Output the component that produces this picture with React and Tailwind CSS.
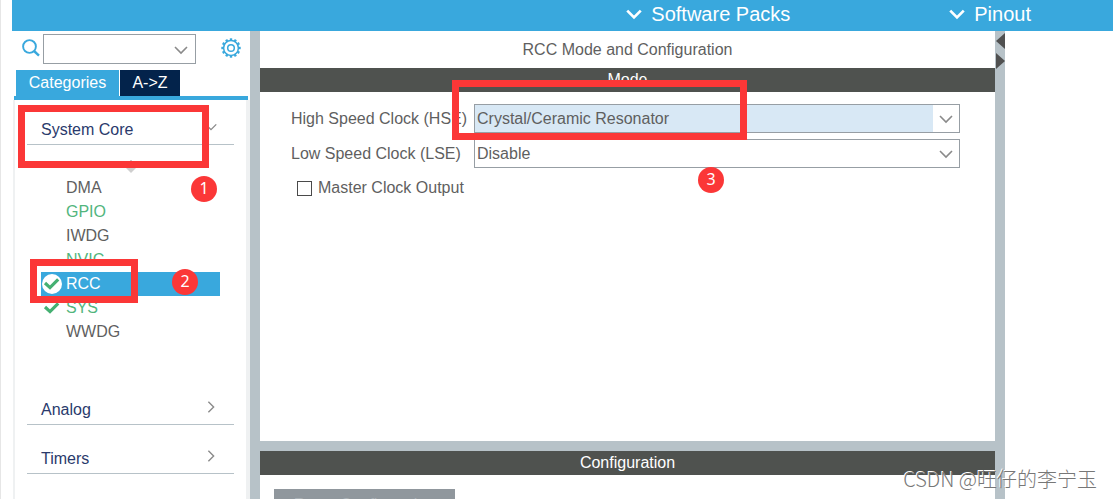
import { useState } from 'react'

const peripherals = [
  { name: 'DMA' },
  { name: 'GPIO', configured: true },
  { name: 'IWDG' },
  { name: 'NVIC', configured: true },
  { name: 'RCC', configured: true, check: true },
  { name: 'SYS', configured: true, check: true },
  { name: 'WWDG' },
]

const moreSections = ['Analog', 'Timers', 'Connectivity']

function Chevron({ className, direction = 'down', stroke = 1.6 }) {
  const d = direction === 'down' ? 'M2 5 L8 11 L14 5' : 'M5 2 L11 8 L5 14'
  return (
    <svg viewBox="0 0 16 16" className={className} fill="none" stroke="currentColor" strokeWidth={stroke} aria-hidden="true">
      <path d={d} />
    </svg>
  )
}

function SearchIcon() {
  return (
    <svg viewBox="0 0 18 18" className="size-[18px] text-[#39a8dd]" fill="none" stroke="currentColor" strokeWidth="1.9" aria-hidden="true">
      <circle cx="7.5" cy="7.5" r="6.4" />
      <path d="M12 12 L17 16.6" strokeWidth="2.4" />
    </svg>
  )
}

function GearIcon() {
  const teeth = [0, 30, 60, 90, 120, 150, 180, 210, 240, 270, 300, 330]
  return (
    <svg viewBox="0 0 20 20" className="size-5 text-[#39a8dd]" fill="none" stroke="currentColor" aria-hidden="true">
      <circle cx="10" cy="10" r="7.4" strokeWidth="1.5" />
      <circle cx="10" cy="10" r="3.3" strokeWidth="1.5" />
      {teeth.map((angle) => (
        <path key={angle} d="M10 0.3 V2.6" strokeWidth="2.4" transform={`rotate(${angle} 10 10)`} />
      ))}
    </svg>
  )
}

function CheckMark({ selected }) {
  return (
    <svg viewBox="0 0 20 20" className="size-5" fill="none" aria-hidden="true">
      {selected && <circle cx="10" cy="10" r="10" fill="#fff" />}
      <path d="M3 9 L8 13.6 L16.2 5.4" stroke="#45b072" strokeWidth="3.2" />
    </svg>
  )
}

function Section({ name, open }) {
  return (
    <button className="mx-3 flex h-[45px] shrink-0 items-end justify-between border-b border-[#b7c2c8] pr-4 pb-1 pl-3.5 text-left text-[#2a3a6c]">
      <span>{name}</span>
      <Chevron direction={open ? 'down' : 'right'} className="mb-1.5 size-3.5 text-[#8a8a8a]" />
    </button>
  )
}

function ClockSelect({ id, label, value, options, onChange, highlighted }) {
  return (
    <div className="flex items-center">
      <label htmlFor={id} className="w-[183px] shrink-0 whitespace-nowrap">{label}</label>
      <div className="relative flex-1">
        <select
          id={id}
          value={value}
          onChange={(e) => onChange(e.target.value)}
          className={`block h-[29px] w-full appearance-none border border-[#979ea4] pl-0.5 ${highlighted ? 'bg-[#d8e8f5]' : 'bg-white'}`}
        >
          {options.map((option) => (
            <option key={option}>{option}</option>
          ))}
        </select>
        <span className="pointer-events-none absolute inset-y-px right-px flex w-[26px] items-center justify-center bg-white">
          <Chevron className="size-4 text-[#8a8a8a]" />
        </span>
      </div>
    </div>
  )
}

function Badge({ className, children }) {
  return (
    <span className={`absolute flex size-[26px] items-center justify-center rounded-full bg-[#fb3737] pb-0.5 font-['Noto_Sans',sans-serif] text-base text-white ${className}`}>
      {children}
    </span>
  )
}

function App() {
  const [tab, setTab] = useState('categories')
  const [selected, setSelected] = useState('RCC')
  const [hse, setHse] = useState('Crystal/Ceramic Resonator')
  const [lse, setLse] = useState('Disable')
  const [mco, setMco] = useState(false)

  return (
    <div className="relative flex h-screen flex-col overflow-hidden border-l border-[#e6e6e6] bg-white pl-[11px] font-['Liberation_Sans',Arial,sans-serif] text-base leading-5 text-[#5f5f5f]">
      <header className="flex h-[31px] shrink-0 items-center justify-end gap-[158px] bg-[#39a8dd] pr-[82px] pb-1 text-xl text-white">
        <button className="flex items-center gap-2">
          <Chevron className="size-[18px]" stroke={2.4} />
          Software Packs
        </button>
        <button className="flex items-center gap-2">
          <Chevron className="size-[18px]" stroke={2.4} />
          Pinout
        </button>
      </header>

      <div className="flex min-h-0 flex-1">
        <aside className="flex w-[238px] shrink-0 flex-col">
          <div className="flex h-[39px] shrink-0 items-start pt-[3px] pr-[9px] pl-[10px]">
            <label htmlFor="search" className="pt-[5px]" aria-label="Search">
              <SearchIcon />
            </label>
            <div className="relative ml-[3px] w-[153px]">
              <select id="search" className="block h-[30px] w-full appearance-none border border-[#979ea4] bg-white px-1">
                <option></option>
              </select>
              <Chevron className="pointer-events-none absolute top-2 right-[7px] size-4 text-[#8a8a8a]" />
            </div>
            <button className="mt-1 ml-auto" aria-label="Settings">
              <GearIcon />
            </button>
          </div>

          <div className="mx-0.5 flex h-[30px] shrink-0 gap-px border-b-4 border-[#39a8dd] pl-0.5 text-white">
            <button
              onClick={() => setTab('categories')}
              className={`w-[103px] ${tab === 'categories' ? 'bg-[#39a8dd]' : 'bg-[#03234b]'}`}
            >
              Categories
            </button>
            <button
              onClick={() => setTab('az')}
              className={`w-[60px] ${tab === 'az' ? 'bg-[#39a8dd]' : 'bg-[#03234b]'}`}
            >
              A-&gt;Z
            </button>
          </div>

          <nav className="ml-px flex min-h-0 flex-1 flex-col overflow-hidden border-r-4 border-l-2 border-[#eff1f2]">
            <Section name="System Core" open />
            <svg viewBox="0 0 10 14" className="mx-auto mt-[15px] h-3.5 w-2.5 shrink-0" aria-hidden="true">
              <path d="M5 0 L9 4 H1 Z" fill="#9a9a9a" />
              <path d="M0 8 H10 L5 13 Z" fill="#cfcfcf" />
            </svg>
            <ul className="mt-0.5 mr-[26px] mb-9 ml-[26px] shrink-0">
              {peripherals.map((item) => (
                <li key={item.name}>
                  <button
                    onClick={() => setSelected(item.name)}
                    className={`flex h-6 w-full items-center gap-1 pl-px ${
                      selected === item.name ? 'bg-[#39a8dd] text-white' : item.configured ? 'text-[#52b57d]' : ''
                    }`}
                  >
                    <span className="size-5 shrink-0">
                      {item.check && <CheckMark selected={selected === item.name} />}
                    </span>
                    {item.name}
                  </button>
                </li>
              ))}
            </ul>
            <div className="flex shrink-0 flex-col gap-1">
              {moreSections.map((name) => (
                <Section key={name} name={name} />
              ))}
            </div>
          </nav>
        </aside>

        <main className="flex min-w-0 flex-1 flex-col border-l-[10px] border-[#b7c2c8]">
          <h1 className="flex h-[37px] shrink-0 items-center justify-center">RCC Mode and Configuration</h1>
          <h2 className="flex h-6 shrink-0 items-center justify-center bg-[#4f524f] text-white">Mode</h2>
          <form className="flex h-[350px] shrink-0 flex-col gap-1.5 border-b border-[#b7c2c8] pt-3 pr-[35px] pl-[31px]">
            <ClockSelect
              id="hse"
              label="High Speed Clock (HSE)"
              value={hse}
              onChange={setHse}
              options={['Disable', 'BYPASS Clock Source', 'Crystal/Ceramic Resonator']}
              highlighted
            />
            <ClockSelect
              id="lse"
              label="Low Speed Clock (LSE)"
              value={lse}
              onChange={setLse}
              options={['Disable', 'BYPASS Clock Source', 'Crystal/Ceramic Resonator']}
            />
            <label className="flex items-center gap-1.5 pt-1 pl-1.5">
              <input
                type="checkbox"
                checked={mco}
                onChange={(e) => setMco(e.target.checked)}
                className="size-[15px] appearance-none border border-[#4a4a4a] bg-white checked:bg-[#39a8dd]"
              />
              Master Clock Output
            </label>
          </form>
          <div className="h-[9px] shrink-0 bg-[#b7c2c8]" />
          <h2 className="flex h-6 shrink-0 items-center justify-center bg-[#4f524f] text-white">Configuration</h2>
          <div className="px-3.5 pt-3.5">
            <button className="h-8 w-[181px] bg-[#90979d] text-[#a9b0b5]">Reset Configuration</button>
          </div>
        </main>

        <div className="w-[10px] shrink-0 bg-[#b7c2c8]">
          <svg viewBox="0 0 10 40" className="h-10 w-2.5" fill="#505050" aria-hidden="true">
            <path d="M10 2 V18 L1 10 Z" />
            <path d="M1 22 V38 L10 30 Z" />
          </svg>
        </div>
        <div className="w-[108px] shrink-0" />
      </div>

      <div className="pointer-events-none absolute top-[105px] left-[17px] h-[63px] w-[191px] border-[7px] border-[#fb3737]" />
      <div className="pointer-events-none absolute top-[259px] left-[29px] h-11 w-[108px] border-[7px] border-[#fb3737]" />
      <div className="pointer-events-none absolute top-20 left-[451px] h-[60px] w-[295px] border-[7px] border-[#fb3737]" />
      <Badge className="top-[176px] left-[190px]">1</Badge>
      <Badge className="top-[269px] left-[171px]">2</Badge>
      <Badge className="top-[167px] left-[697px]">3</Badge>
      <p className="absolute right-4 bottom-2 font-['Noto_Sans_CJK_SC',sans-serif] text-xl leading-6 font-light whitespace-nowrap text-[#777777] [text-shadow:-1px_-1px_0_#fff]">
        CSDN @旺仔的李宁玉
      </p>
    </div>
  )
}

export default App
